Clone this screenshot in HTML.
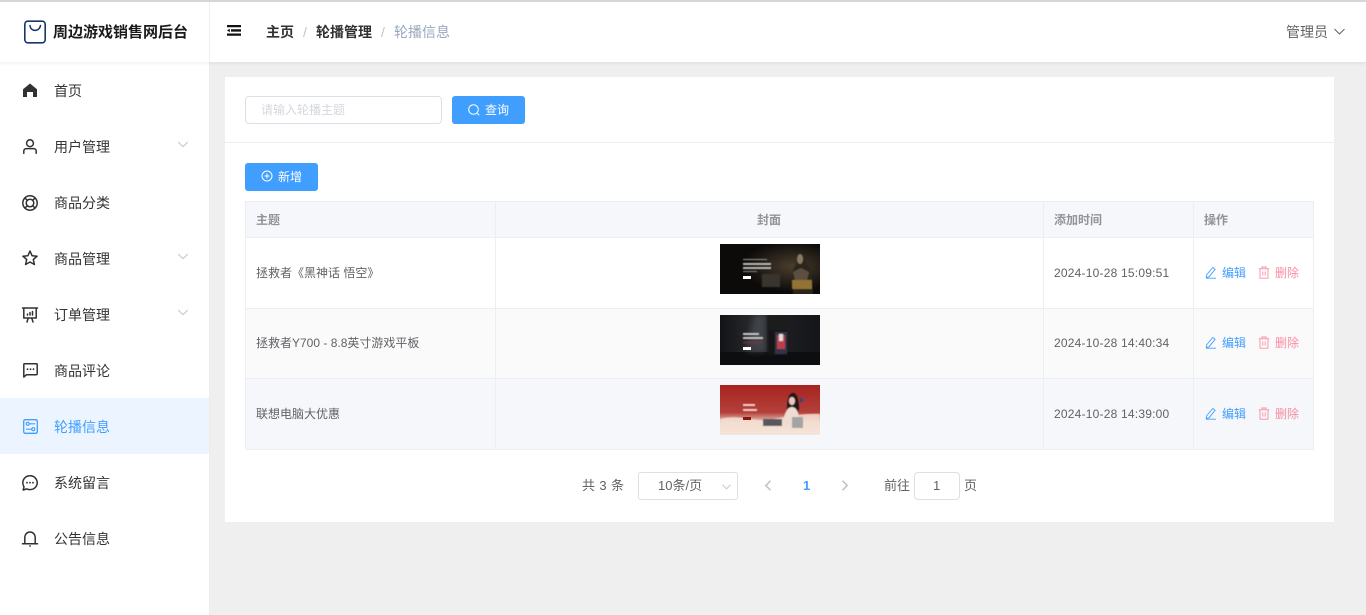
<!DOCTYPE html>
<html lang="zh-CN">
<head>
<meta charset="utf-8">
<title>轮播信息</title>
<style>
*{box-sizing:border-box}
html,body{margin:0;padding:0;width:1366px;height:615px;overflow:hidden;background:#efefef;font-family:"Liberation Sans","Noto Sans CJK SC",sans-serif;color:#606266;font-size:13px}
.a{position:absolute}
.t{position:absolute;white-space:nowrap;line-height:20px}
svg{position:absolute;display:block;overflow:visible}
.mi{position:absolute;left:54px;font-size:14px;line-height:20px;color:#333;white-space:nowrap}
.ic{fill:none;stroke:#303133;stroke-width:1.5;stroke-linecap:round;stroke-linejoin:round}
.ch{fill:none;stroke:#c0c4cc;stroke-width:1;stroke-linecap:round;stroke-linejoin:round}
.cell{position:absolute;white-space:nowrap;line-height:20px;font-size:12px;color:#606266}
.dt{letter-spacing:.21px}
.hd{position:absolute;white-space:nowrap;line-height:20px;font-size:12px;font-weight:700;color:#909399}
.ln{position:absolute;background:#ebeef5}
.btn{position:absolute;background:#409eff;border-radius:3px;color:#fff;font-size:12px;height:28px;width:73px}
.blue{color:#409eff}.pink{color:#f98da2}
</style>
</head>
<body>

<!-- sidebar -->
<div class="a" style="left:0;top:0;width:210px;height:615px;background:#fff;border-right:1px solid #ececec"></div>
<!-- header -->
<div class="a" style="left:0;top:0;width:1366px;height:62px;background:#fff;box-shadow:0 1px 4px rgba(0,21,41,.08)"></div>
<div class="a" style="left:209px;top:0;width:1px;height:62px;background:#f0f0f0"></div>
<div class="a" style="left:0;top:0;width:1366px;height:2px;background:#d6d6d6;z-index:5"></div>

<!-- logo -->
<svg style="left:24px;top:20px" width="22" height="24" viewBox="0 0 22 24"><rect x=".8" y="1.200" width="20.400" height="21.600" rx="3" fill="none" stroke="#17356f" stroke-width="1.600"/><path d="M6 5.500C6.500 12 15.500 12 16.500 5.500" fill="none" stroke="#17356f" stroke-width="1.500" stroke-linecap="round"/></svg>
<div class="t" style="left:53px;top:22px;font-size:15px;font-weight:700;color:#1a1a1a;line-height:21px">周边游戏销售网后台</div>

<!-- menu -->
<svg style="left:23px;top:83px" width="14" height="14" viewBox="0 0 14 14"><path d="M7 .5 14 6.300V14H10V9H4v5H0V6.300z" fill="#303133"/></svg>
<div class="mi" style="top:81px">首页</div>

<svg style="left:23px;top:139px" width="14" height="15" viewBox="0 0 14 15"><circle class="ic" cx="7" cy="4.200" r="3.400" stroke-width="1.200"/><path class="ic" stroke-width="1.200" d="M.8 14.200v-2.200C.8 10.400 2 9.600 3.400 9.600h7.200c1.400 0 2.600.8 2.600 2.400v2.200"/></svg>
<div class="mi" style="top:137px">用户管理</div>
<svg style="left:178px;top:142px" width="10" height="6" viewBox="0 0 10 6"><path class="ch" d="M.5.400 5 4.600 9.500.4"/></svg>

<svg style="left:22px;top:195px" width="16" height="16" viewBox="0 0 16 16"><circle class="ic" cx="8" cy="8" r="7.200" stroke-width="1.200"/><circle class="ic" cx="8" cy="8" r="3.800" stroke-width="1.200"/><path class="ic" stroke-width="1" d="M3 3l2.300 2.300M13 3l-2.300 2.300M3 13l2.300-2.300M13 13l-2.300-2.300"/></svg>
<div class="mi" style="top:193px">商品分类</div>

<svg style="left:22px;top:250px" width="16" height="16" viewBox="0 0 16 16"><path class="ic" stroke-width="1.200" d="M8 1l2.100 4.700 5 .5-3.800 3.300 1.100 5L8 12l-4.400 2.500 1.100-5L.9 6.200l5-.5z"/></svg>
<div class="mi" style="top:249px">商品管理</div>
<svg style="left:178px;top:254px" width="10" height="6" viewBox="0 0 10 6"><path class="ch" d="M.5.400 5 4.600 9.500.4"/></svg>

<svg style="left:22px;top:307px" width="16" height="16" viewBox="0 0 16 16"><path class="ic" stroke-width="1.200" d="M.5 1h15M1.800 1v10h12.400V1M5 15l1.300-4M11 15l-1.300-4"/><path class="ic" stroke-width="1.200" d="M5.500 8V7M8 8V5.500M10.500 8V4.500"/></svg>
<div class="mi" style="top:305px">订单管理</div>
<svg style="left:178px;top:310px" width="10" height="6" viewBox="0 0 10 6"><path class="ch" d="M.5.400 5 4.600 9.500.4"/></svg>

<svg style="left:23px;top:363px" width="15" height="15" viewBox="0 0 15 15"><path class="ic" stroke-width="1.200" d="M1.700.8h11.600c.5 0 .9.400.9.900v9.100c0 .5-.4.900-.9.900H3.500L.8 14V1.700c0-.5.400-.9.900-.9z"/><circle cx="4.500" cy="6.200" r=".9" fill="#303133"/><circle cx="7.500" cy="6.200" r=".9" fill="#303133"/><circle cx="10.500" cy="6.200" r=".9" fill="#303133"/></svg>
<div class="mi" style="top:361px">商品评论</div>

<div class="a" style="left:0;top:398px;width:209px;height:56px;background:#ecf5ff"></div>
<svg style="left:23px;top:419px" width="15" height="15" viewBox="0 0 15 15"><rect x=".7" y=".7" width="13.600" height="13.600" rx="1.500" fill="none" stroke="#409eff" stroke-width="1.300"/><circle cx="4.700" cy="4.800" r="1.500" fill="none" stroke="#409eff" stroke-width="1.100"/><circle cx="10.300" cy="10.200" r="1.500" fill="none" stroke="#409eff" stroke-width="1.100"/><path d="M6.500 4.800h5.500M3 10.200h5.500" fill="none" stroke="#409eff" stroke-width="1.100"/></svg>
<div class="mi" style="top:417px;color:#409eff">轮播信息</div>

<svg style="left:22px;top:475px" width="16" height="16" viewBox="0 0 16 16"><path class="ic" stroke-width="1.200" d="M8 .8c4 0 7.200 3 7.200 6.900S12 14.600 8 14.600c-1.200 0-2.300-.3-3.300-.7L1.200 15l.8-3.200C1.200 10.700.8 9.300.8 7.700.8 3.800 4 .8 8 .8z"/><circle cx="5" cy="7.700" r=".9" fill="#303133"/><circle cx="8" cy="7.700" r=".9" fill="#303133"/><circle cx="11" cy="7.700" r=".9" fill="#303133"/></svg>
<div class="mi" style="top:473px">系统留言</div>

<svg style="left:22px;top:531px" width="16" height="16" viewBox="0 0 16 16"><path class="ic" stroke-width="1.200" d="M.5 12.800h15M2.800 12.800V6.800C2.800 3.400 5 1 8 1s5.200 2.400 5.200 5.800v6"/><circle cx="8" cy="15" r=".9" fill="#303133"/></svg>
<div class="mi" style="top:529px">公告信息</div>

<!-- header content -->
<svg style="left:227px;top:25px" width="14" height="11" viewBox="0 0 14 11"><path d="M0 0h14v2.300H0zM4 4.300h10v2.300H4zM0 8.500h14v2.300H0z" fill="#111"/><path d="M0 5.400 2.800 3.700v3.500z" fill="#111"/></svg>
<div class="t" style="left:266px;top:22px;font-weight:700;color:#303133;font-size:14px">主页</div>
<div class="t" style="left:303px;top:22px;color:#c0c4cc;font-size:14px">/</div>
<div class="t" style="left:316px;top:22px;font-weight:700;color:#303133;font-size:14px">轮播管理</div>
<div class="t" style="left:381px;top:22px;color:#c0c4cc;font-size:14px">/</div>
<div class="t" style="left:394px;top:22px;color:#97a8be;font-size:14px">轮播信息</div>
<div class="t" style="left:1286px;top:22px;color:#606266;font-size:14px">管理员</div>
<svg style="left:1334px;top:28px" width="11" height="7" viewBox="0 0 11 7"><path d="M.5 1 5.500 6 10.500 1" fill="none" stroke="#606266" stroke-width="1"/></svg>

<!-- card -->
<div class="a" style="left:225px;top:77px;width:1109px;height:445px;background:#fff"></div>
<div class="a" style="left:225px;top:142px;width:1109px;height:1px;background:#ebeef5"></div>

<div class="a" style="left:245px;top:96px;width:197px;height:28px;border:1px solid #dcdfe6;border-radius:4px;background:#fff"></div>
<div class="t" style="left:261px;top:100px;font-size:12px;color:#d4d7de">请输入轮播主题</div>

<div class="btn" style="left:452px;top:96px"></div>
<svg style="left:468px;top:104px" width="12" height="12" viewBox="0 0 12 12"><circle cx="5.500" cy="5.500" r="4.800" fill="none" stroke="#fff" stroke-width="1"/><path d="M9 9l2.300 2.300" stroke="#fff" stroke-width="1" fill="none"/></svg>
<div class="t" style="left:485px;top:100px;font-size:12px;color:#fff">查询</div>

<div class="btn" style="left:245px;top:163px"></div>
<svg style="left:261px;top:170px" width="12" height="12" viewBox="0 0 12 12"><circle cx="6" cy="6" r="5" fill="none" stroke="#fff" stroke-width="1"/><path d="M6 3.500v5M3.500 6h5" stroke="#fff" stroke-width="1" fill="none"/></svg>
<div class="t" style="left:278px;top:167px;font-size:12px;color:#fff">新增</div>

<!-- table -->
<div class="a" style="left:245px;top:201px;width:1069px;height:37px;background:#f5f7fa"></div>
<div class="a" style="left:245px;top:308px;width:1069px;height:71px;background:#fafafa"></div>
<div class="a" style="left:245px;top:379px;width:1069px;height:71px;background:#f5f7fa"></div>
<div class="ln" style="left:245px;top:201px;width:1069px;height:1px"></div>
<div class="ln" style="left:245px;top:237px;width:1069px;height:1px"></div>
<div class="ln" style="left:245px;top:308px;width:1069px;height:1px"></div>
<div class="ln" style="left:245px;top:378px;width:1069px;height:1px"></div>
<div class="ln" style="left:245px;top:449px;width:1069px;height:1px"></div>
<div class="ln" style="left:245px;top:201px;width:1px;height:249px"></div>
<div class="ln" style="left:495px;top:201px;width:1px;height:249px"></div>
<div class="ln" style="left:1043px;top:201px;width:1px;height:249px"></div>
<div class="ln" style="left:1193px;top:201px;width:1px;height:249px"></div>
<div class="ln" style="left:1313px;top:201px;width:1px;height:249px"></div>

<div class="hd" style="left:256px;top:210px">主题</div>
<div class="hd" style="left:757px;top:210px">封面</div>
<div class="hd" style="left:1054px;top:210px">添加时间</div>
<div class="hd" style="left:1204px;top:210px">操作</div>

<svg style="left:0;top:0" width="0" height="0"><defs>
<filter id="b" x="-5%" y="-5%" width="110%" height="110%"><feGaussianBlur stdDeviation=".6"/></filter>
<filter id="b2" x="-30%" y="-30%" width="160%" height="160%"><feGaussianBlur stdDeviation="3"/></filter>
<radialGradient id="g1" cx="72%" cy="45%" r="50%"><stop offset="0" stop-color="#4a3d2c"/><stop offset=".7" stop-color="#1e1a15"/><stop offset="1" stop-color="#0d0b09"/></radialGradient>
<linearGradient id="g2" x1="0" x2="1" y1="0" y2="0"><stop offset="0" stop-color="#121316"/><stop offset=".4" stop-color="#2c2e32"/><stop offset=".7" stop-color="#1b1c1f"/><stop offset="1" stop-color="#141518"/></linearGradient>
<linearGradient id="g3" x1="0" x2="0" y1="0" y2="1"><stop offset="0" stop-color="#a62320"/><stop offset=".55" stop-color="#b4403a"/><stop offset=".75" stop-color="#e9cdbf"/><stop offset="1" stop-color="#fbf1ea"/></linearGradient>
</defs></svg>

<!-- row 1 -->
<div class="cell" style="left:256px;top:263px">拯救者《黑神话 悟空》</div>
<svg style="left:720px;top:244px;overflow:hidden" width="100" height="50" viewBox="0 0 100 50">
<rect width="100" height="50" fill="url(#g1)"/>
<g filter="url(#b)">
<path d="M73 50V26l3-6 4-10 4 1 3 9 4 7 2 23z" fill="#2a251d"/>
<ellipse cx="80" cy="15" rx="3" ry="5" fill="#8b7a5e"/>
<path d="M73 28l8-4 8 4-2 8H75z" fill="#5d5040"/>
<rect x="23" y="15" width="24" height="1" fill="#999"/><rect x="23" y="19" width="28" height="2" fill="#bbb"/><rect x="23" y="23" width="28" height="2" fill="#bbb"/><rect x="23" y="27" width="14" height="1" fill="#888"/>
<rect x="42" y="30" width="18" height="13" fill="#38362f"/>
<rect x="72" y="36" width="20" height="9" fill="#b58d3f" opacity=".75"/>
</g>
<rect x="23" y="32" width="8" height="3" fill="#fff"/>
</svg>
<div class="cell dt" style="left:1054px;top:263px">2024-10-28 15:09:51</div>

<!-- row 2 -->
<div class="cell" style="left:256px;top:333px">拯救者Y700 - 8.8英寸游戏平板</div>
<svg style="left:720px;top:315px;overflow:hidden" width="100" height="50" viewBox="0 0 100 50">
<rect width="100" height="50" fill="url(#g2)"/>
<rect y="37" width="100" height="13" fill="#0d0e10"/>
<path d="M34 0h12v37H26z" fill="#55585e" opacity=".5" filter="url(#b2)"/>
<g filter="url(#b)">
<rect x="47" y="0" width="22" height="37" fill="#1a1b1e"/>
<rect x="49" y="15" width="18" height="25" fill="#141518"/>
<rect x="55" y="17" width="12" height="22" fill="#30344a"/>
<path d="M57 20h8v14h-8z" fill="#b9414a"/>
<path d="M59 19h4v7h-4z" fill="#ddd"/>
<rect x="23" y="18" width="16" height="2" fill="#c8c8c8"/><rect x="23" y="22" width="20" height="2" fill="#c8c8c8"/><rect x="23" y="27" width="20" height="1" fill="#8a3030"/>
</g>
<rect x="23" y="32" width="8" height="3" fill="#fff"/>
</svg>
<div class="cell dt" style="left:1054px;top:333px">2024-10-28 14:40:34</div>

<!-- row 3 -->
<div class="cell" style="left:256px;top:404px">联想电脑大优惠</div>
<svg style="left:720px;top:385px;overflow:hidden" width="100" height="50" viewBox="0 0 100 50">
<rect width="100" height="50" fill="url(#g3)"/>
<g filter="url(#b)">
<path d="M0 34c15-4 25 0 40 1s30-7 60-6v21H0z" fill="#f4e0d4" opacity=".85"/>
<path d="M67 24c0-10 2-16 6-16s6 6 6 16l-2 6h-8z" fill="#241816"/>
<ellipse cx="72" cy="16" rx="3" ry="4" fill="#ecc9ba"/>
<path d="M63 40c0-10 4-18 9-18s8 8 8 18z" fill="#efdcd3"/>
<rect x="72" y="32" width="11" height="11" fill="#a3a3a3"/>
<rect x="80" y="13" width="3" height="4" fill="#3a3f8a"/>
<rect x="43" y="34" width="19" height="7" fill="#5a5760"/>
<rect x="23" y="19" width="12" height="2" fill="#f5d3cc"/><rect x="23" y="24" width="14" height="2" fill="#f5d3cc"/>
</g>
<rect x="23" y="32" width="8" height="3" fill="#8a1512"/>
</svg>
<div class="cell dt" style="left:1054px;top:404px">2024-10-28 14:39:00</div>

<!-- actions -->
<svg style="left:1205px;top:266px" width="12" height="13" viewBox="0 0 12 13"><path d="M1.500 9 7.800 1.500l2.300 1.800L4 10.800l-2.700.6zM1 12.200h10" fill="none" stroke="#409eff" stroke-width=".9"/></svg>
<div class="cell blue" style="left:1222px;top:263px">编辑</div>
<svg style="left:1258px;top:266px" width="12" height="13" viewBox="0 0 12 13"><path d="M.8 2.800h10.400M4 2.800V1h4v1.800M2 2.800v9.400h8V2.800M4.800 5.500v4M7.200 5.500v4" fill="none" stroke="#f98da2" stroke-width=".9"/></svg>
<div class="cell pink" style="left:1275px;top:263px">删除</div>

<svg style="left:1205px;top:336px" width="12" height="13" viewBox="0 0 12 13"><path d="M1.500 9 7.800 1.500l2.300 1.800L4 10.800l-2.700.6zM1 12.200h10" fill="none" stroke="#409eff" stroke-width=".9"/></svg>
<div class="cell blue" style="left:1222px;top:333px">编辑</div>
<svg style="left:1258px;top:336px" width="12" height="13" viewBox="0 0 12 13"><path d="M.8 2.800h10.400M4 2.800V1h4v1.800M2 2.800v9.400h8V2.800M4.800 5.500v4M7.200 5.500v4" fill="none" stroke="#f98da2" stroke-width=".9"/></svg>
<div class="cell pink" style="left:1275px;top:333px">删除</div>

<svg style="left:1205px;top:407px" width="12" height="13" viewBox="0 0 12 13"><path d="M1.500 9 7.800 1.500l2.300 1.800L4 10.800l-2.700.6zM1 12.200h10" fill="none" stroke="#409eff" stroke-width=".9"/></svg>
<div class="cell blue" style="left:1222px;top:404px">编辑</div>
<svg style="left:1258px;top:407px" width="12" height="13" viewBox="0 0 12 13"><path d="M.8 2.800h10.400M4 2.800V1h4v1.800M2 2.800v9.400h8V2.800M4.800 5.500v4M7.200 5.500v4" fill="none" stroke="#f98da2" stroke-width=".9"/></svg>
<div class="cell pink" style="left:1275px;top:404px">删除</div>

<!-- pagination -->
<div class="t" style="left:582px;top:476px;font-size:13px;color:#606266;letter-spacing:.4px">共 3 条</div>
<div class="a" style="left:638px;top:472px;width:100px;height:28px;border:1px solid #dcdfe6;border-radius:3px;background:#fff"></div>
<div class="t" style="left:658px;top:476px;font-size:13px;color:#606266">10条/页</div>
<svg style="left:722px;top:484px" width="9" height="6" viewBox="0 0 9 6"><path d="M.5.800 4.500 4.800 8.500.8" fill="none" stroke="#c0c4cc" stroke-width="1"/></svg>
<svg style="left:764px;top:480px" width="8" height="11" viewBox="0 0 8 11"><path d="M6.500.8 1.800 5.500l4.700 4.700" fill="none" stroke="#c0c4cc" stroke-width="1.600"/></svg>
<div class="t" style="left:803px;top:476px;font-size:13px;font-weight:700;color:#409eff">1</div>
<svg style="left:841px;top:480px" width="8" height="11" viewBox="0 0 8 11"><path d="M1.500.8 6.200 5.500 1.500 10.200" fill="none" stroke="#c0c4cc" stroke-width="1.600"/></svg>
<div class="t" style="left:884px;top:476px;font-size:13px;color:#606266">前往</div>
<div class="a" style="left:914px;top:472px;width:46px;height:28px;border:1px solid #dcdfe6;border-radius:4px;background:#fff"></div>
<div class="t" style="left:933px;top:476px;font-size:13px;color:#606266">1</div>
<div class="t" style="left:964px;top:476px;font-size:13px;color:#606266">页</div>
</body>
</html>
